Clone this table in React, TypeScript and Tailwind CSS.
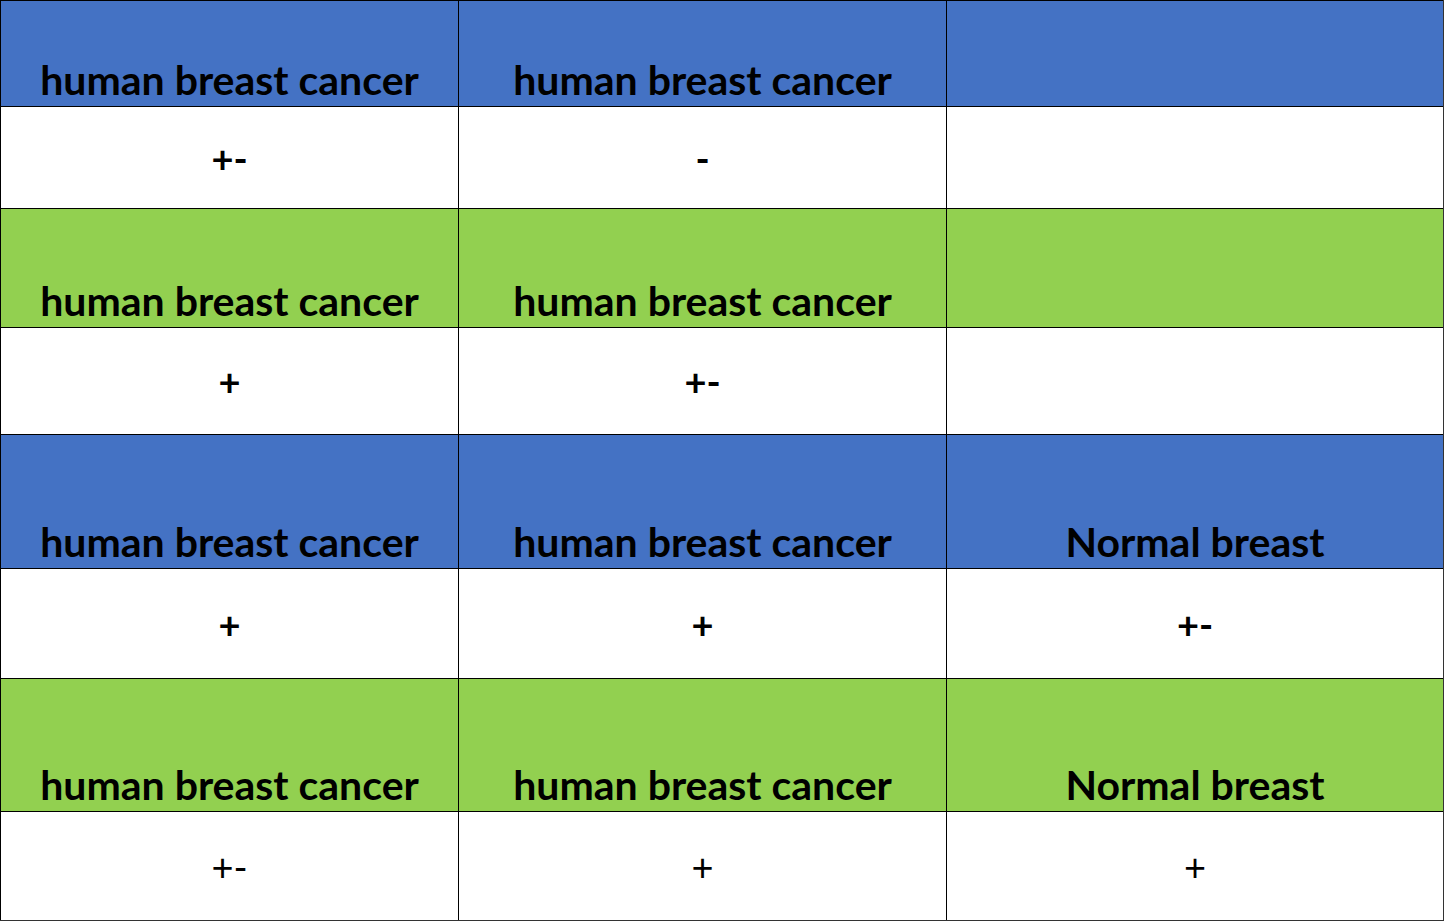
const BLUE = 'bg-[#4472c4]';
const GREEN = 'bg-[#92d050]';

type Row = { kind: 'head'; bg: string; h: string; cells: string[] } | { kind: 'val'; h: string; bold: boolean; cells: string[] };

const ROWS: Row[] = [
  { kind: 'head', bg: BLUE, h: 'h-[106px]', cells: ['human breast cancer', 'human breast cancer', ''] },
  { kind: 'val', h: 'h-[102px]', bold: true, cells: ['+-', '-', ''] },
  { kind: 'head', bg: GREEN, h: 'h-[119px]', cells: ['human breast cancer', 'human breast cancer', ''] },
  { kind: 'val', h: 'h-[107px]', bold: true, cells: ['+', '+-', ''] },
  { kind: 'head', bg: BLUE, h: 'h-[134px]', cells: ['human breast cancer', 'human breast cancer', 'Normal breast'] },
  { kind: 'val', h: 'h-[110px]', bold: true, cells: ['+', '+', '+-'] },
  { kind: 'head', bg: GREEN, h: 'h-[133px]', cells: ['human breast cancer', 'human breast cancer', 'Normal breast'] },
  { kind: 'val', h: 'h-[109px]', bold: false, cells: ['+-', '+', '+'] },
];

const COLS = ['w-[458px]', 'w-[488px]', 'w-[497px]'];

export default function App() {
  return (
    <div className="min-h-screen bg-white font-['Lato',sans-serif] text-black">
      <div className="w-[1444px] border-r border-b border-[#333]">
        {ROWS.map((row, r) => (
          <div key={r} className={`flex ${row.h}`}>
            {row.cells.map((text, c) =>
              row.kind === 'head' ? (
                <div
                  key={c}
                  className={`${COLS[c]} ${row.bg} border-l border-t border-black flex items-end justify-center text-[41px] font-bold leading-none`}
                >
                  <span className="translate-y-[-6px]">{text}</span>
                </div>
              ) : (
                <div
                  key={c}
                  className={`${COLS[c]} bg-white border-l border-t border-black flex items-center justify-center text-[38px] leading-none ${row.bold ? 'font-bold' : 'font-normal'}`}
                >
                  {text}
                </div>
              )
            )}
          </div>
        ))}
      </div>
    </div>
  );
}
